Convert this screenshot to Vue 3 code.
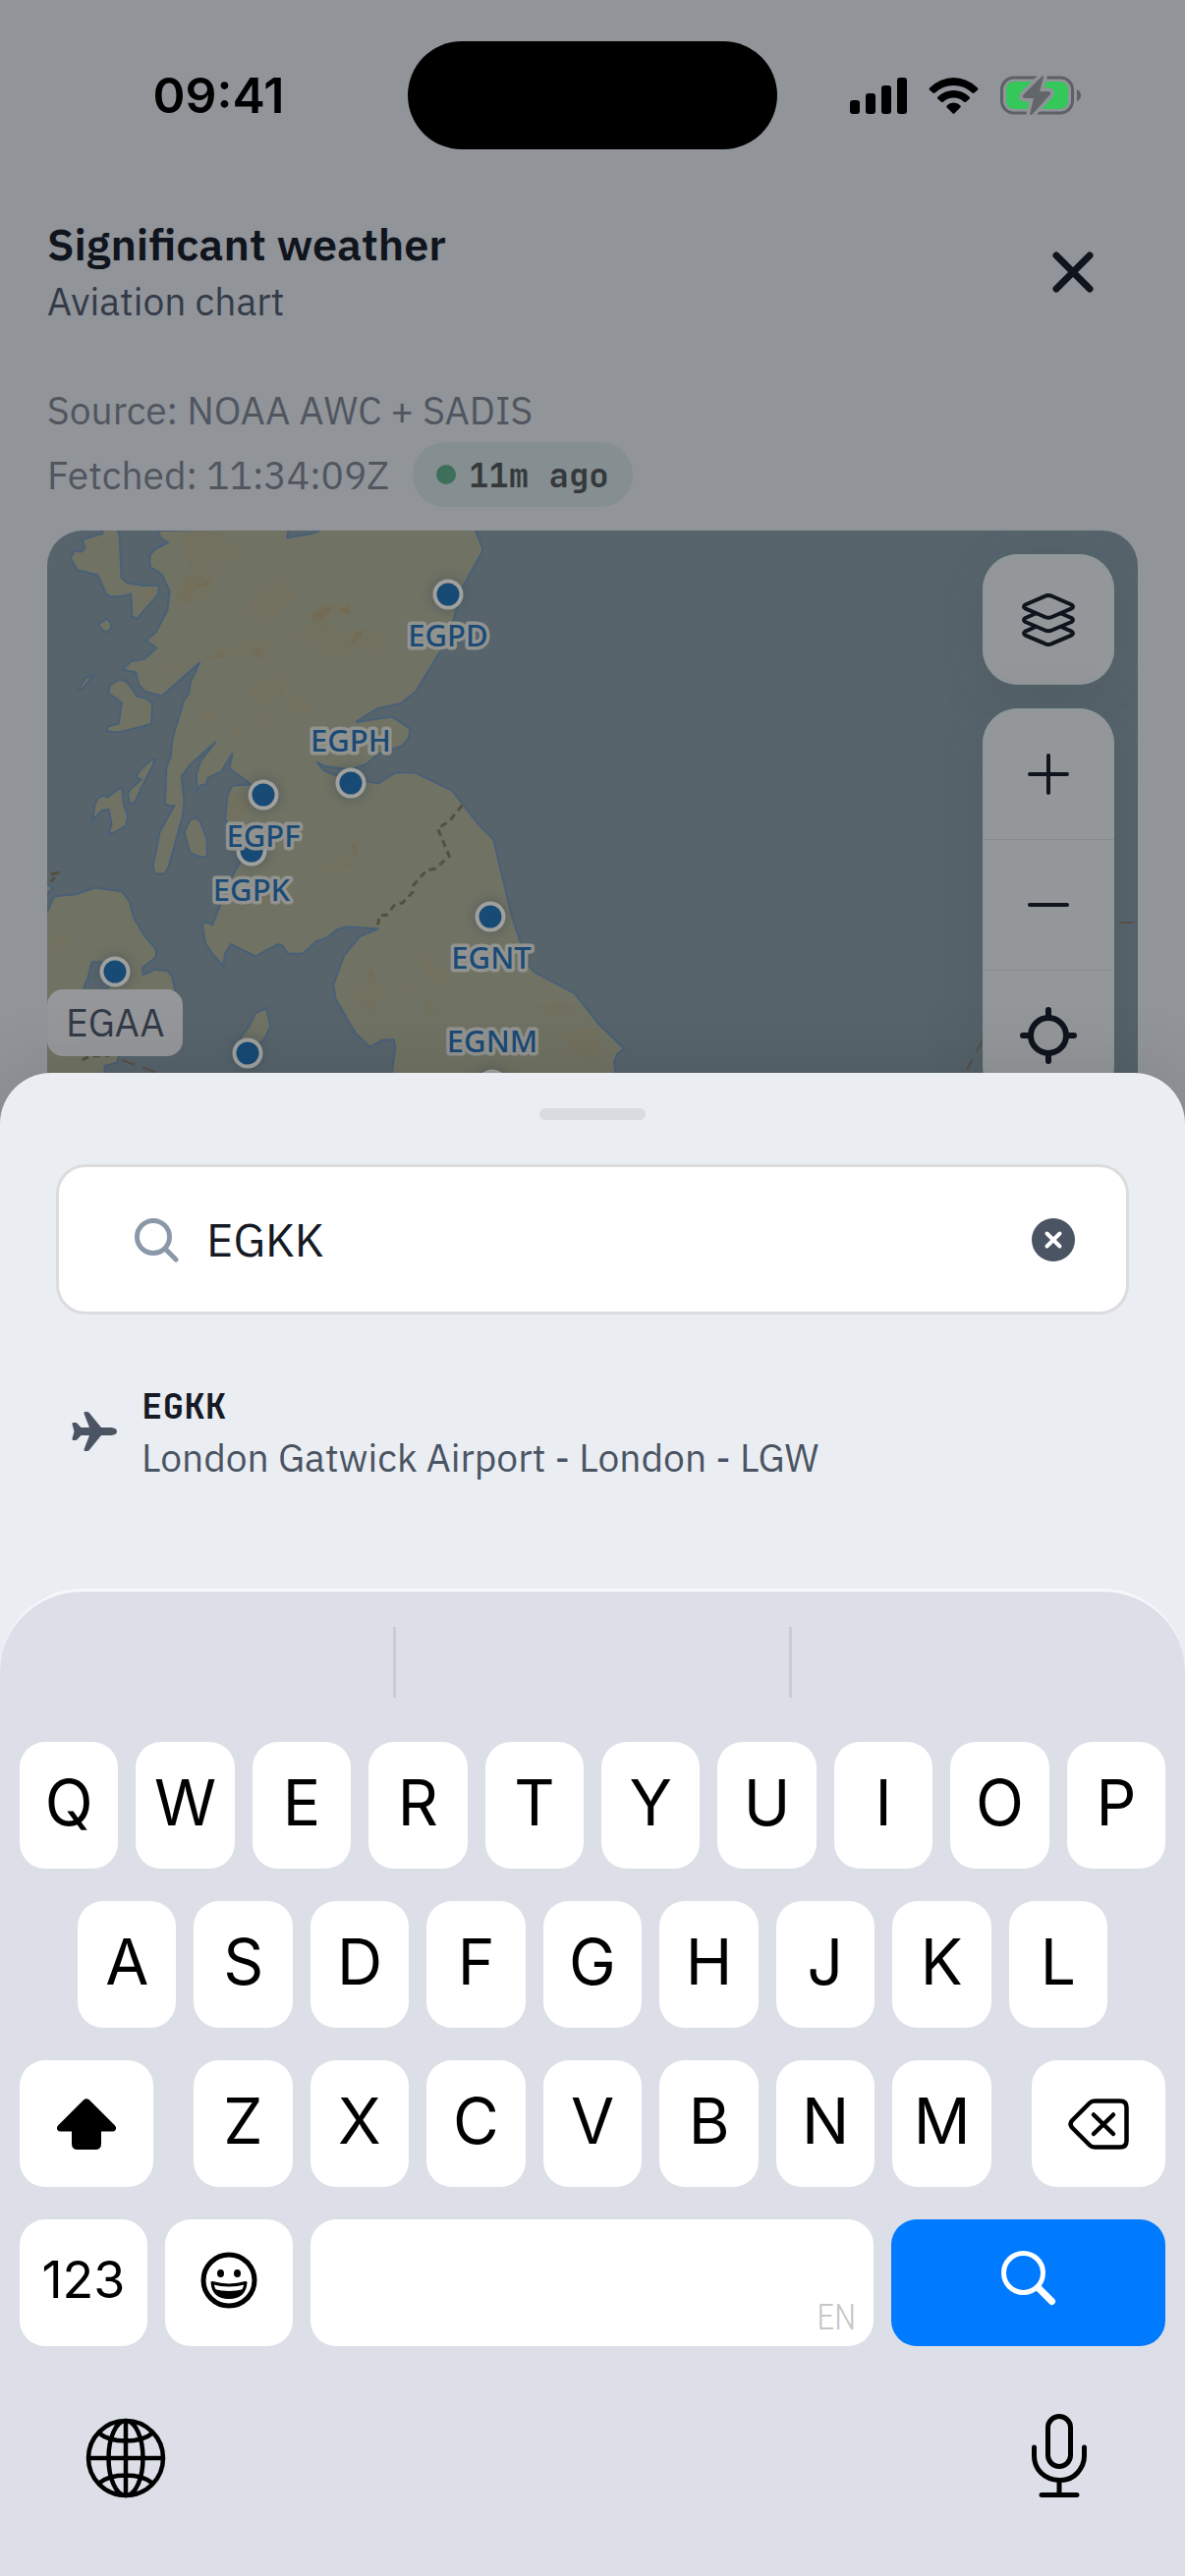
<script setup>
import { ref } from 'vue'

const query = ref('EGKK')

const results = [
  { code: 'EGKK', name: 'London Gatwick Airport - London - LGW' }
]

const pins = [
  { x: 208, y: 326 },
  { x: 408, y: 65 },
  { x: 309, y: 257 },
  { x: 220, y: 269 },
  { x: 451, y: 393 },
  { x: 69, y: 449 },
  { x: 204, y: 532 },
  { x: 453, y: 564 }
]

const labels = [
  { code: 'EGPD', x: 408, y: 118 },
  { code: 'EGPH', x: 309, y: 225 },
  { code: 'EGPF', x: 220, y: 322 },
  { code: 'EGPK', x: 208, y: 377 },
  { code: 'EGNT', x: 452, y: 446 },
  { code: 'EGNM', x: 453, y: 531 }
]

const land = [
  // Great Britain
  'M305 28 312 48 330 62 298 80 284 98 285 130 315 150 335 196 330 250 300 312 274 335 301 357 270 388 235 394 215 418 248 425 256 460 272 478 316 491 413 397 388 455 385 483 372 503 343 608 338 660 327 690 323 793 332 798 347 799 310 870 292 970 298 988 322 989 333 968 368 830 373 790 366 716 388 684 454 619 415 673 404 710 406 758 414 742 430 738 434 720 469 702 497 651 489 694 545 739 497 742 484 768 478 835 490 860 510 920 517 955 495 998 445 1132 428 1123 419 1131 427 1182 446 1214 473 1247 478 1212 493 1186 557 1220 613 1186 625 1190 640 1213 677 1213 713 1178 742 1167 765 1146 790 1137 873 1143 825 1164 784 1218 757 1298 762 1338 812 1433 850 1474 882 1455 912 1453 916 1475 905 1568 895 1640 1500 1640 1485 1568 1479 1516 1488 1493 1505 1478 1440 1410 1378 1324 1275 1265 1262 1250 1240 1185 1216 1108 1169 894 1130 850 1090 795 1062 756 968 706 916 706 872 736 802 722 755 710 733 700 714 676 735 688 800 697 842 682 870 655 935 630 950 610 955 583 907 549 815 564 870 526 930 512 968 480 1030 370 1065 280 1088 190 1142 82 1120 20 720 20 720 28 700 37 638 48 642 20Z',
  // Skye
  'M163 20 162 37 110 53 118 78 105 88 92 84 80 104 97 138 150 153 172 205 182 213 207 213 235 206 239 270 252 274 305 208 309 184 300 181 267 182 228 175 211 160 207 45 200 20Z',
  'M150 289 164 283 173 274 183 285 185 300 174 314 164 308Z',
  'M101 471 120 440 138 435 112 470Z',
  // Mull
  'M177 483 182 460 205 446 220 448 235 465 250 492 275 498 291 512 288 570 205 593 175 590 175 577 204 569 212 510Z',
  // Jura and Islay
  'M299 668 285 672 258 700 248 718 262 725 232 755 228 765 232 792 245 790 262 750 285 700Z',
  'M212 745 175 775 165 769 150 778 142 798 137 840 160 812 178 808 186 850 178 877 192 874 222 855 228 828 217 795Z',
  // Arran
  'M388 838 400 832 413 840 431 890 432 942 412 941 387 930 373 872Z',
  // Ireland
  'M10 1110 20 1095 38 1052 95 1046 142 1028 212 1038 232 1066 243 1112 268 1158 300 1200 301 1222 265 1252 267 1272 297 1257 330 1261 342 1278 352 1330 345 1400 300 1470 205 1498 200 1518 168 1527 168 1640 10 1640Z',
  'M10 1014 20 1018 35 1028 10 1056Z',
  // Isle of Man
  'M584 1365 595 1416 577 1455 545 1480 515 1450 540 1416 555 1380Z'
]

const hills = [
  'M370 50 400 28 470 40 515 95 480 115 430 110 420 165 385 215 360 235 355 190 395 145Z',
  'M530 250 560 215 600 180 630 165 640 190 665 200 650 225 615 245 600 280 560 265Z',
  'M700 260 725 240 760 232 800 238 790 255 745 270 735 295 710 285Z',
  'M655 320 700 290 745 300 800 318 850 305 890 330 895 375 850 355 790 365 745 385 715 350 690 335Z',
  'M445 385 460 362 500 360 545 330 590 335 585 385 560 395 545 365 500 380Z',
  'M535 480 570 455 600 450 645 432 650 455 620 480 585 520 560 500Z',
  'M640 500 660 488 705 525 690 545 655 530Z',
  'M415 535 450 540 455 565 425 558Z',
  'M500 585 530 575 520 610 500 612Z',
  'M555 560 590 540 580 575Z',
  'M490 770 540 760 535 800 505 840 488 830Z',
  'M800 890 815 885 818 935 800 970 790 955 805 930Z',
  'M735 970 770 945 790 965 760 985Z',
  'M565 1050 600 1030 610 1060 585 1080Z',
  'M985 1230 1010 1212 1015 1245 1045 1265 1030 1295 1005 1280Z',
  'M840 1260 860 1262 855 1290 885 1320 865 1345 850 1370 820 1340 815 1315 850 1300Z',
  'M1000 1350 1015 1335 1015 1385 1000 1380Z',
  'M1290 1360 1340 1350 1380 1365 1330 1385Z',
  'M1350 1430 1440 1425 1430 1500 1370 1490Z',
  'M945 1290 965 1300 950 1320Z',
  'M250 530 280 515 275 550Z',
  'M265 200 295 195 270 230Z',
  'M380 170 440 150 450 180 400 235 375 220Z',
  'M460 130 480 125 470 155Z',
  'M330 420 360 405 345 425Z',
  'M40 1165 75 1155 70 1195 45 1200Z'
]

const peaks = [
  'M705 262 730 248 755 240 745 260 725 280 705 278Z',
  'M770 250 798 238 800 262 780 260Z',
  'M800 350 815 315 835 305 825 330 805 350Z',
  'M452 378 470 370 468 384 452 384Z',
  'M400 185 438 168 435 182 405 188Z',
  'M555 360 570 362 568 382 556 376Z',
  'M613 490 628 486 622 494Z',
  'M805 910 815 905 812 935Z',
  'M848 1265 858 1265 852 1285Z',
  'M535 310 546 312 542 318Z'
]

const topRow = 'QWERTYUIOP'.split('')
const homeRow = 'ASDFGHJKL'.split('')
const bottomRow = 'ZXCVBNM'.split('')

function type(key) {
  query.value += key
}

function backspace() {
  query.value = query.value.slice(0, -1)
}

function clear() {
  query.value = ''
}
</script>

<template>
  <div class="screen">
    <div class="status-bar">
      <div class="status-time">09:41</div>
      <div class="island"></div>
      <div class="status-icons">
        <svg width="58" height="37" viewBox="0 0 58 37">
          <rect x="0" y="23" width="10" height="14" rx="3" />
          <rect x="16" y="16" width="10" height="21" rx="3" />
          <rect x="32" y="8" width="10" height="29" rx="3" />
          <rect x="48" y="0" width="10" height="37" rx="3" />
        </svg>
        <svg width="51" height="37" viewBox="0 0 51 37">
          <path d="M1 10.500Q0 11.500 1 12.500L4.500 15.500Q5.500 16.300 6.500 15.400Q15 8 25.500 8T44.500 15.400Q45.500 16.300 46.500 15.500L50 12.500Q51 11.500 50 10.500Q39 0 25.500 0T1 10.500Z" />
          <path d="M9 20Q8.500 20.800 9.500 21.700L13 24.700Q14 25.500 15 24.700Q19.500 20.500 25.500 20.500T36 24.700Q37 25.500 38 24.700L41.500 21.700Q42.500 20.800 42 20Q35 13 25.500 13T9 20Z" />
          <path d="M18.500 28.500Q17.800 29.500 18.700 30.400L24.500 36.300Q25.500 37.300 26.500 36.300L32.300 30.400Q33.200 29.500 32.500 28.500Q29.500 25.500 25.500 25.500T18.500 28.500Z" />
        </svg>
        <svg width="82" height="40" viewBox="0 0 82 40">
          <rect x="1.500" y="2" width="72" height="36" rx="12.500" fill="none" stroke="#5d6064" stroke-width="3" />
          <rect x="6" y="6" width="63" height="28" rx="8" fill="#34c759" />
          <path d="M78 14Q82 16 82 20T78 26Z" fill="#5d6064" />
          <path d="M43 0 23 20Q22 23 25 23H34L30 39Q31 41 33 39L51 19Q52 16 49 16H40L44 2Q44 0 43 0Z" fill="#62666a" stroke="#909398" stroke-width="7" stroke-linejoin="round" paint-order="stroke" />
        </svg>
      </div>
    </div>

    <header class="header">
      <div>
        <h1 class="title">Significant weather</h1>
        <p class="subtitle">Aviation chart</p>
      </div>
      <button class="close" aria-label="Close">
        <svg width="42" height="42" viewBox="0 0 42 42">
          <path d="M4 4 38 38M38 4 4 38" fill="none" stroke="#10141d" stroke-width="7" stroke-linecap="round" />
        </svg>
      </button>
    </header>

    <div class="meta">
      <div class="meta-row">Source: NOAA AWC + SADIS</div>
      <div class="meta-row">
        <span>Fetched: 11:34:09Z</span>
        <span class="badge"><i class="badge-dot"></i>11m ago</span>
      </div>
    </div>

    <main class="map">
      <svg class="map-canvas" viewBox="0 0 1110 2058">
        <defs>
          <filter id="pin-shadow" x="-1" y="-1" width="3" height="3">
            <feGaussianBlur stdDeviation="5" />
          </filter>
        </defs>
        <g transform="scale(0.3954 0.3636) translate(-20 -28)">
          <path v-for="(d, i) in land" :key="'l' + i" class="land" :d="d" />
          <path v-for="(d, i) in hills" :key="'h' + i" class="hill" :d="d" />
          <path v-for="(d, i) in peaks" :key="'p' + i" class="peak" :d="d" />
          <path class="lake" d="M135 1236 160 1236 190 1262 176 1312 118 1325 115 1305 125 1280Z" />
          <path class="border" d="M1088 797 1055 842 1025 862 1055 940 1018 975 998 978 963 1020 961 1040 935 1070 915 1075 893 1105 876 1105 871 1132" />
          <path class="border" d="M110 1510 130 1500 180 1498" />
          <path class="border" d="M30 990 47 987 30 1012" />
        </g>
        <path class="airspace" d="M76 539 112 552M952 519 936 549M1091 399H1105" />
        <g v-for="(p, i) in pins" :key="'pin' + i">
          <circle :cx="p.x" :cy="p.y" r="19" fill="#3f5057" opacity="0.35" filter="url(#pin-shadow)" />
          <circle :cx="p.x" :cy="p.y" r="13.500" fill="#174a75" stroke="#a0a09e" stroke-width="4" />
        </g>
        <text v-for="l in labels" :key="l.code" class="map-label" :x="l.x" :y="l.y">{{ l.code }}</text>
      </svg>

      <div class="tooltip">EGAA</div>

      <div class="controls">
        <div class="control-group">
          <button class="control" aria-label="Layers">
            <svg width="54" height="54" viewBox="0 0 54 54" class="line-icon">
              <path d="M23.500 2.800Q27 1.200 30.500 2.800L50.500 11.500Q53.500 13.400 50.500 15.300L30.500 24Q27 25.600 23.500 24L3.500 15.300Q.5 13.400 3.500 11.500Z" />
              <path d="M14 20.500 3.500 25Q.5 27 3.500 29L23.500 37.500Q27 39.200 30.500 37.500L50.500 29Q53.500 27 50.500 25L40 20.500" />
              <path d="M14 34 3.500 38.600Q.5 40.600 3.500 42.600L23.500 51.200Q27 52.800 30.500 51.200L50.500 42.600Q53.500 40.600 50.500 38.600L40 34" />
            </svg>
          </button>
        </div>
        <div class="control-group">
          <button class="control" aria-label="Zoom in">
            <svg width="42" height="42" viewBox="0 0 42 42" class="line-icon">
              <path d="M2 21H40M21 2V40" />
            </svg>
          </button>
          <button class="control" aria-label="Zoom out">
            <svg width="42" height="42" viewBox="0 0 42 42" class="line-icon">
              <path d="M2 21H40" />
            </svg>
          </button>
          <button class="control" aria-label="Locate">
            <svg width="58" height="58" viewBox="0 0 58 58" class="line-icon bold">
              <circle cx="29" cy="29" r="18" />
              <path d="M29 3V10M29 48V55M3 29H10M48 29H55" />
            </svg>
          </button>
        </div>
      </div>
    </main>

    <section class="sheet">
      <div class="sheet-top">
        <div class="handle"></div>
      </div>
      <form class="search" @submit.prevent>
        <label class="search-label" for="search" aria-label="Search airports">
          <svg width="46" height="46" viewBox="0 0 46 46">
            <g fill="none" stroke="#8b98a8" stroke-width="5" stroke-linecap="round">
              <circle cx="20" cy="20" r="16.500" />
              <path d="M32 32 43 43" />
            </g>
          </svg>
        </label>
        <input id="search" v-model="query" class="search-input" type="text" autocomplete="off">
        <button class="search-clear" type="button" aria-label="Clear" @click="clear">
          <svg width="44" height="44" viewBox="0 0 44 44">
            <circle cx="22" cy="22" r="22" fill="#4a5463" />
            <path d="M15.500 15.500 28.500 28.500M28.500 15.500 15.500 28.500" stroke="#fff" stroke-width="4" stroke-linecap="round" />
          </svg>
        </button>
      </form>

      <ul class="results">
        <li v-for="r in results" :key="r.code">
          <button class="result">
            <svg width="46" height="40" viewBox="0 0 46 40" fill="#4a5463">
              <path d="M13.500 0H15.500Q17 0 18 1.200L30 16H40Q46 16.500 46 20T40 24H30L18 38.800Q17 40 15.500 40H13.500Q12 40 12.500 38.300L18 24H9.500L5.500 28.300Q5 29 4 29H1.500Q0 29 .5 27.300L2.500 20 .5 12.700Q0 11 1.500 11H4Q5 11 5.500 11.700L9.500 16H18L12.500 1.700Q12 0 13.500 0Z" />
            </svg>
            <span class="result-text">
              <span class="result-code">{{ r.code }}</span>
              <span class="result-name">{{ r.name }}</span>
            </span>
          </button>
        </li>
      </ul>

      <div class="keyboard">
        <div class="suggestions">
          <span></span><span></span><span></span>
        </div>
        <div class="keys">
          <div class="key-row">
            <button v-for="k in topRow" :key="k" class="key" @click="type(k)">{{ k }}</button>
          </div>
          <div class="key-row home">
            <button v-for="k in homeRow" :key="k" class="key" @click="type(k)">{{ k }}</button>
          </div>
          <div class="key-row wide-gap">
            <button class="key shift" aria-label="Shift">
              <svg width="60" height="52" viewBox="0 0 60 52">
                <path d="M27 1.500Q30 -1 33 1.500L59 27.500Q61 30 59.500 32Q58.500 33.500 56.500 33.500H45V46Q45 52 39 52H21Q15 52 15 46V33.500H3.500Q1.500 33.500 .5 32Q-1 30 1 27.500Z" />
              </svg>
            </button>
            <div class="key-row letters">
              <button v-for="k in bottomRow" :key="k" class="key" @click="type(k)">{{ k }}</button>
            </div>
            <button class="key shift" aria-label="Delete" @click="backspace">
              <svg width="62" height="52" viewBox="0 0 62 52">
                <g fill="none" stroke="#000" stroke-width="4.500" stroke-linecap="round" stroke-linejoin="round">
                  <path d="M27 2.500H53Q59.500 2.500 59.500 9V43Q59.500 49.500 53 49.500H27Q24 49.500 22 47.500L4 29.500Q1 26 4 22.500L22 4.500Q24 2.500 27 2.500Z" />
                  <path d="M26 16.500 46 36M46 16.500 26 36" />
                </g>
              </svg>
            </button>
          </div>
          <div class="key-row">
            <button class="key mode">123</button>
            <button class="key mode" aria-label="Emoji">
              <svg width="58" height="58" viewBox="0 0 58 58">
                <circle cx="29" cy="29" r="26" fill="none" stroke="#000" stroke-width="5" />
                <ellipse cx="20.500" cy="22" rx="3.500" ry="4" />
                <ellipse cx="37.500" cy="22" rx="3.500" ry="4" />
                <path d="M12 31.500Q29 36.500 46 31.500Q44.500 46.500 29 46.500T12 31.500Z" fill="#fff" stroke="#000" stroke-width="3" stroke-linejoin="round" />
                <path d="M14 38Q29 42 44 38Q40 47.500 29 47.500T14 38Z" />
              </svg>
            </button>
            <button class="key space" aria-label="Space" @click="type(' ')"><span>EN</span></button>
            <button class="key go" aria-label="Search">
              <svg width="56" height="56" viewBox="0 0 56 56">
                <circle cx="22.500" cy="22.500" r="20" fill="none" stroke="#fff" stroke-width="5" />
                <path d="M38 38 51.500 51.500" stroke="#fff" stroke-width="7" stroke-linecap="round" />
              </svg>
            </button>
          </div>
        </div>
        <div class="dock">
          <button class="dock-button" aria-label="Next keyboard">
            <svg width="82" height="82" viewBox="0 0 82 82">
              <g fill="none" stroke="#000" stroke-width="4.500">
                <circle cx="41" cy="41" r="38" />
                <ellipse cx="41" cy="41" rx="17.500" ry="38" />
                <path d="M41 3V79M3 41H79M13 15Q23 23.500 41 23.500T69 15M13 67Q23 58.500 41 58.500T69 67" />
              </g>
            </svg>
          </button>
          <button class="dock-button" aria-label="Dictate">
            <svg width="56" height="90" viewBox="0 0 56 90">
              <g fill="none" stroke="#000" stroke-width="5" stroke-linecap="round">
                <rect x="16.500" y="2.500" width="23" height="51" rx="11.500" />
                <path d="M2.500 34V43Q2.500 53 9.500 60T28 67.500T46.500 60T53.500 43V34M28 67.500V82M10 82.500H46" />
              </g>
            </svg>
          </button>
        </div>
      </div>
    </section>
  </div>
</template>

<style>
html,
body,
#app {
  height: 100%;
}

body {
  background: #919499;
}
</style>

<style scoped>
.screen {
  position: relative;
  min-height: 100%;
  display: flex;
  flex-direction: column;
  overflow: hidden;
  background: #919499;
  font-family: 'IBM Plex Sans', Roboto, 'Liberation Sans', sans-serif;
  font-size: 39px;
  color: #10141d;
}

button {
  padding: 0;
  border: 0;
  background: none;
  font: inherit;
  color: inherit;
  cursor: pointer;
}

svg {
  display: block;
  flex-shrink: 0;
}

.status-bar {
  display: grid;
  grid-template-columns: 1fr 376px 1fr;
  align-items: center;
  padding-top: 42px;
  color: #000;
}

.status-time {
  padding-left: 30px;
  text-align: center;
  font-family: Inter, sans-serif;
  font-size: 50px;
  font-weight: 600;
}

.island {
  height: 110px;
  border-radius: 55px;
  background: #000;
}

.status-icons {
  display: flex;
  align-items: center;
  justify-content: center;
  gap: 22px;
  padding-right: 32px;
}

.header {
  display: flex;
  align-items: center;
  justify-content: space-between;
  margin-top: 68px;
  padding: 0 93px 0 48px;
}

.title {
  margin: 0 0 4px;
  font-size: 45px;
  font-weight: 600;
  line-height: 56px;
}

.subtitle {
  margin: 0;
  line-height: 54px;
  color: #343b48;
}

.meta {
  margin-top: 50px;
  padding: 0 48px;
  color: #50565f;
}

.meta-row {
  display: flex;
  align-items: center;
  gap: 24px;
  height: 66px;
}

.badge {
  display: flex;
  align-items: center;
  gap: 13px;
  height: 66px;
  padding: 0 24px;
  border-radius: 33px;
  background: #858e90;
  color: #35393c;
  font-family: 'JetBrains Mono', 'IBM Plex Mono', 'DejaVu Sans Mono', monospace;
  font-size: 34px;
  font-weight: 600;
}

.badge-dot {
  width: 20px;
  height: 20px;
  border-radius: 50%;
  background: #3d6f5a;
}

.map {
  position: relative;
  flex: 1;
  margin: 24px 48px 0;
  border-radius: 36px 36px 0 0;
  overflow: hidden;
  background: #57646c;
}

.map-canvas {
  position: absolute;
  width: 100%;
}

.land {
  fill: #707263;
  stroke: #486077;
  stroke-width: 2;
  vector-effect: non-scaling-stroke;
}

.lake {
  fill: #57646c;
  stroke: #486077;
  stroke-width: 2;
  vector-effect: non-scaling-stroke;
}

.hill {
  fill: #766f59;
  stroke: #766f59;
  stroke-width: 8;
  stroke-linejoin: round;
  opacity: 0.45;
}

.peak {
  fill: #776850;
  opacity: 0.6;
}

.border {
  fill: none;
  stroke: #54503f;
  stroke-width: 3;
  stroke-dasharray: 7 5;
  vector-effect: non-scaling-stroke;
}

.airspace {
  fill: none;
  stroke: #595148;
  stroke-width: 2;
  stroke-dasharray: 14 8;
}

.map-label {
  font-family: 'Noto Sans', sans-serif;
  font-size: 31px;
  font-weight: 500;
  text-anchor: middle;
  fill: #1a4a76;
  stroke: #92938f;
  stroke-width: 7px;
  stroke-linejoin: round;
  paint-order: stroke;
}

.tooltip {
  position: absolute;
  left: 0;
  top: 467px;
  padding: 0 19px;
  border-radius: 16px;
  background: #95979a;
  color: #333a47;
  line-height: 68px;
}

.controls {
  position: absolute;
  top: 24px;
  right: 24px;
  display: flex;
  flex-direction: column;
  gap: 24px;
}

.control-group {
  width: 134px;
  border-radius: 36px;
  background: #939799;
  box-shadow: 0 6px 60px rgba(40, 55, 62, 0.14), inset 0 0 0 1px #8a9799;
}

.control {
  display: flex;
  align-items: center;
  justify-content: center;
  width: 100%;
  height: 133px;
}

.control + .control {
  border-top: 1px solid #868b8e;
}

.line-icon {
  fill: none;
  stroke: #10141d;
  stroke-width: 4;
  stroke-linecap: round;
  stroke-linejoin: round;
}

.line-icon.bold {
  stroke-width: 6;
}

.sheet {
  position: absolute;
  left: 0;
  right: 0;
  bottom: 0;
  border-radius: 52px 52px 0 0;
  background: #eaedf2;
  box-shadow: 0 0 80px rgba(0, 0, 0, 0.12);
}

.sheet-top {
  padding: 36px 0 45px;
}

.handle {
  width: 108px;
  height: 12px;
  margin: 0 auto;
  border-radius: 6px;
  background: #d8dbe0;
}

.search {
  display: flex;
  align-items: center;
  gap: 28px;
  height: 147px;
  margin: 0 57px;
  padding: 0 52px 0 76px;
  border: 3px solid #dcdcde;
  border-radius: 30px;
  background: #fff;
}

.search-input {
  flex: 1;
  min-width: 0;
  padding: 0;
  border: 0;
  outline: 0;
  background: none;
  font: inherit;
  font-size: 47px;
  color: #151a24;
}

.results {
  margin: 0;
  padding: 66px 57px 107px;
  list-style: none;
}

.result {
  display: flex;
  align-items: center;
  gap: 25px;
  width: 100%;
  padding-left: 16px;
  text-align: left;
}

.result-text {
  display: flex;
  flex-direction: column;
}

.result-code {
  font-family: 'JetBrains Mono', 'IBM Plex Mono', 'DejaVu Sans Mono', monospace;
  font-size: 36px;
  font-weight: 600;
  line-height: 54px;
  color: #151a24;
}

.result-name {
  line-height: 52px;
  color: #4a5463;
}

.keyboard {
  border-top: 3px solid #f6f8fa;
  border-radius: 84px 84px 0 0;
  background: #dcdfe7;
  font-family: Inter, sans-serif;
  color: #000;
}

.suggestions {
  display: flex;
  padding: 36px 0 45px;
}

.suggestions span {
  flex: 1;
  height: 72px;
}

.suggestions span:not(:last-child) {
  border-right: 3px solid #c9ccd4;
}

.keys {
  display: flex;
  flex-direction: column;
  gap: 33px;
  padding: 0 20px;
}

.key-row {
  display: flex;
  gap: 18px;
}

.key-row.home {
  padding: 0 59px;
}

.key-row.wide-gap {
  gap: 41px;
}

.key-row.letters {
  flex: 812 1 0;
}

.key {
  display: flex;
  align-items: center;
  justify-content: center;
  flex: 1 1 0;
  min-width: 0;
  height: 129px;
  padding-bottom: 6px;
  border-radius: 26px;
  background: #fff;
  font-size: 64px;
}

.key.shift {
  flex: 136 1 0;
  padding-bottom: 0;
}

.key.mode {
  flex: 130 1 0;
  font-size: 52px;
}

.key.space {
  flex: 574 1 0;
  align-items: flex-end;
  justify-content: flex-end;
  padding-bottom: 8px;
  font-family: 'Roboto Condensed', 'IBM Plex Sans Condensed', 'Open Sans Condensed', Roboto, sans-serif;
  font-size: 36px;
  font-weight: 300;
  color: #c4c6c8;
}

.key.space span {
  margin-right: 18px;
}

.key.go {
  flex: 279 1 0;
  padding-bottom: 10px;
  background: #007aff;
}

.dock {
  display: flex;
  align-items: center;
  justify-content: space-between;
  padding: 69px 86px 75px;
}

.dock-button {
  display: flex;
  align-items: center;
  justify-content: center;
  width: 84px;
  height: 90px;
}
</style>
